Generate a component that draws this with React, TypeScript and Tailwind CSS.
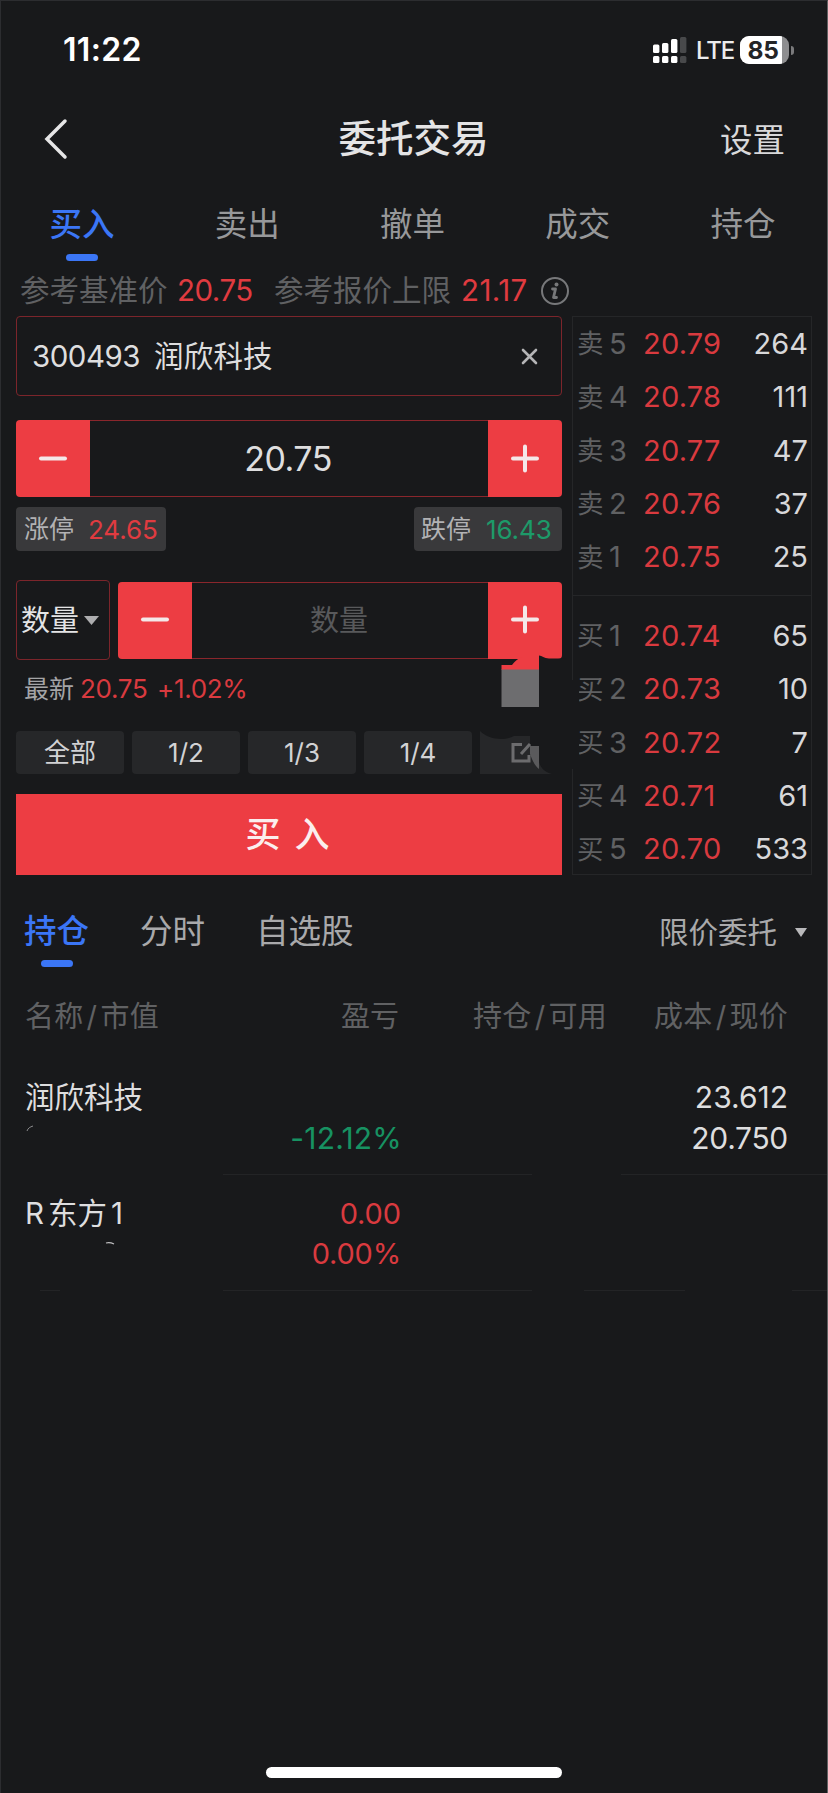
import React from "react";

const tabs = ["买入", "卖出", "撤单", "成交", "持仓"];

const asks = [
  ["5", "20.79", "264"],
  ["4", "20.78", "111"],
  ["3", "20.77", "47"],
  ["2", "20.76", "37"],
  ["1", "20.75", "25"],
];

const bids = [
  ["1", "20.74", "65"],
  ["2", "20.73", "10"],
  ["3", "20.72", "7"],
  ["4", "20.71", "61"],
  ["5", "20.70", "533"],
];

function StatusBar() {
  return (
    <div className="flex h-[98px] items-center pl-[62px]">
      <span className="w-[589px] text-[32px] leading-none font-semibold tracking-[0.3px] text-white">11:22</span>
      <svg className="h-[28px] w-[36px]" viewBox="0 0 36 28">
        <g fill="#fff">
          <rect x="1" y="8.5" width="6.4" height="8.5" rx="1.5" />
          <rect x="10" y="7" width="6.4" height="10" rx="1.5" />
          <rect x="19" y="3" width="6.4" height="14" rx="1.5" />
          <rect x="1" y="20" width="6.4" height="7" rx="1.5" />
          <rect x="10" y="20" width="6.4" height="7" rx="1.5" />
          <rect x="19" y="20" width="6.4" height="7" rx="1.5" />
        </g>
        <g fill="#48494b">
          <rect x="28" y="1" width="6.4" height="16" rx="1.5" />
          <rect x="28" y="20" width="6.4" height="7" rx="1.5" />
        </g>
      </svg>
      <span className="ml-[8px] w-[44px] pt-[2px] text-[24px] leading-none font-medium tracking-[-1.1px] text-[#ececec]">LTE</span>
      <div className="flex h-[28px] w-[49px] overflow-hidden rounded-[9px] bg-[#8e8e90]">
        <div className="flex w-[42px] items-center justify-center bg-white pl-[4px] text-[24.5px] leading-none font-bold tracking-[-0.2px] text-[#242527]">85</div>
      </div>
      <div className="ml-[2px] h-[9px] w-[3px] rounded-r-full bg-[#7a7a7c]" />
    </div>
  );
}

function Minus() {
  return (
    <svg className="h-[30px] w-[30px]" viewBox="0 0 30 30" stroke="#f4e8e9" strokeWidth="4" strokeLinecap="round">
      <path d="M3 14.500H27" />
    </svg>
  );
}

function Plus() {
  return (
    <svg className="h-[30px] w-[30px]" viewBox="0 0 30 30" stroke="#f4e8e9" strokeWidth="4" strokeLinecap="round">
      <path d="M3 14.500H27M15 2.500V26.500" />
    </svg>
  );
}

function Stepper({ children }: { children: React.ReactNode }) {
  return (
    <div className="flex h-[77px] flex-1 overflow-hidden rounded-[4px] bg-[#ed3d43]">
      <div className="flex w-[74px] items-center justify-center">
        <Minus />
      </div>
      <div className="flex flex-1 items-center justify-center border-y border-[#8a262c] bg-[#18191b]">{children}</div>
      <div className="flex w-[74px] items-center justify-center">
        <Plus />
      </div>
    </div>
  );
}

function BookRow({ side, row }: { side: string; row: string[] }) {
  return (
    <div className="flex h-[53.3px] items-center pr-[3px] pl-[4px] text-[29px] leading-none whitespace-nowrap">
      <span className="w-[32px] text-[26.5px] text-[#606163]">{side}</span>
      <span className="w-[34px] text-[#606163]">{row[0]}</span>
      <span className="tracking-[0.2px] text-[#d93a3f]">{row[1]}</span>
      <span className="ml-auto text-[#d8d8da]">{row[2]}</span>
    </div>
  );
}

function Shortcut({ children }: { children: React.ReactNode }) {
  return (
    <div className="flex h-[43px] w-[108px] items-center justify-center rounded-[4px] bg-[#262729] text-[26px] leading-none text-[#d2d2d4]">
      {children}
    </div>
  );
}

function OrderForm() {
  return (
    <div className="w-[546px]">
      <div className="flex h-[80px] items-center rounded-[4px] border border-[#7c252b] pt-[1px] pr-[23px] pl-[15px] leading-none text-[#dededf]">
        <span className="w-[122px] text-[29.5px] tracking-[-0.5px]">300493</span>
        <span className="text-[29.5px] tracking-[0.2px]">润欣科技</span>
        <svg className="ml-auto h-[17px] w-[17px]" viewBox="0 0 17 17" stroke="#b4b4b6" strokeWidth="2.6" strokeLinecap="round">
          <path d="M2 2L15 15M15 2L2 15" />
        </svg>
      </div>

      <div className="mt-[24px] flex">
        <Stepper>
          <span className="pt-[1px] pr-[2px] text-[34px] leading-none tracking-[-0.5px] text-[#dededf]">20.75</span>
        </Stepper>
      </div>

      <div className="mt-[10px] flex h-[44px] justify-between leading-none">
        <div className="flex w-[150px] items-center rounded-[4px] bg-[#39393b] pt-[1px] pl-[8px]">
          <span className="w-[64px] text-[25px] text-[#b2b2b4]">涨停</span>
          <span className="text-[26px] tracking-[-0.1px] text-[#e03b40]">24.65</span>
        </div>
        <div className="flex w-[148px] items-center rounded-[4px] bg-[#39393b] pt-[1px] pl-[7px]">
          <span className="w-[65px] text-[25px] text-[#b2b2b4]">跌停</span>
          <span className="text-[26px] tracking-[-0.1px] text-[#1d9a69]">16.43</span>
        </div>
      </div>

      <div className="mt-[29px] flex h-[80px] items-center gap-[8px]">
        <div className="flex h-[80px] w-[94px] items-center rounded-[4px] border border-[#7c252b] pt-[1px] pl-[4px]">
          <span className="text-[29px] leading-none text-[#e4e4e5]">数量</span>
          <svg className="ml-[5px] h-[9px] w-[15px]" viewBox="0 0 15 9">
            <path d="M0 0H15L7.500 9Z" fill="#adadaf" />
          </svg>
        </div>
        <Stepper>
          <span className="pt-[1px] pr-[2px] text-[29px] leading-none text-[#58595b]">数量</span>
        </Stepper>
      </div>

      <div className="relative flex h-[71px] items-start pt-[16px] pl-[8px] leading-none">
        <span className="w-[56px] text-[25px] leading-[26px] text-[#a4a4a6]">最新</span>
        <span className="w-[77px] text-[26px] tracking-[-0.3px] text-[#d93a3f]">20.75</span>
        <span className="text-[26px] tracking-[-0.3px] text-[#d93a3f]">+1.02%</span>
        <svg className="absolute top-[-8px] left-[479px] h-[58px] w-[72px]" viewBox="0 0 72 58">
          <path d="M44 3.500C47 3.500 49 6.500 54 6.500H72V14H44Z" fill="#18191b" />
          <path d="M6.500 13H17C20 9 23 6 28 5H44V18H6.500Z" fill="#ed3d43" />
          <rect x="6.500" y="17.500" width="37.500" height="37.500" fill="#6d6d6f" />
        </svg>
      </div>

      <div className="flex justify-between">
        <Shortcut>全部</Shortcut>
        <Shortcut>1/2</Shortcut>
        <Shortcut>1/3</Shortcut>
        <Shortcut>1/4</Shortcut>
        <svg className="h-[43px] w-[82px]" viewBox="0 0 82 43">
          <path d="M0 0C9 9 25 10 34 5H50V43H0Z" fill="#262729" />
          <path d="M50 15H59C56 30 60 40 72 43H50Z" fill="#262729" />
          <path d="M50 15H59V38C54 34 52 28 50 23Z" fill="#5a5a5c" />
          <path d="M42 13.500H33V30H49V24" fill="none" stroke="#6c6c6e" strokeWidth="3" />
          <path d="M41 23L50 13" stroke="#6c6c6e" strokeWidth="3" />
        </svg>
      </div>

      <div className="mt-[20px] flex h-[81px] items-center justify-center gap-[14px] bg-[#ed3d43] pr-[3px] text-[35px] leading-none font-medium text-[#fbeeee]">
        <span>买</span>
        <span>入</span>
      </div>
    </div>
  );
}

function OrderBook() {
  return (
    <div className="relative h-[559px] w-[240px] border border-[#252628]">
      <div className="h-[279px] border-b border-[#252628]">
        {asks.map((row) => (
          <BookRow key={row[0]} side="卖" row={row} />
        ))}
      </div>
      <div className="pt-[13px]">
        {bids.map((row) => (
          <BookRow key={row[0]} side="买" row={row} />
        ))}
      </div>
      <div className="absolute top-[363px] left-[-2px] h-[89px] w-[8px] bg-[#18191b]" />
    </div>
  );
}

function Positions() {
  return (
    <div className="text-[29px] leading-none whitespace-nowrap">
      <div className="flex h-[100px] items-center pr-[39px] pl-[24px] text-[#606163]">
        <span className="w-[200px] tracking-[0.3px]">名称<span className="mx-[3px]">/</span>市值</span>
        <span className="w-[174px] text-right">盈亏</span>
        <span className="w-[208px] text-right tracking-[0.3px]">持仓<span className="mx-[3px]">/</span>可用</span>
        <span className="ml-auto tracking-[0.3px]">成本<span className="mx-[3px]">/</span>现价</span>
      </div>

      <div className="relative h-[108px] pr-[39px] pl-[24px] text-[#dededf]">
        <div className="flex h-[62px] items-center justify-between">
          <span className="pt-[1px] text-[29.5px]">润欣科技</span>
          <span className="text-[30px]">23.612</span>
        </div>
        <div className="flex h-[19px] items-center">
          <span className="w-[377px] text-right text-[30px] tracking-[0.2px] text-[#179262]">-12.12%</span>
          <span className="ml-auto text-[30px] tracking-[-0.3px]">20.750</span>
        </div>
        <svg className="absolute top-[59px] left-[25px] h-[8px] w-[9px]" viewBox="0 0 9 8">
          <path d="M1 6C2 3 4 2 7 1" fill="none" stroke="#8b8b8d" strokeWidth="1" />
        </svg>
      </div>
      <div className="flex h-px">
        <div className="ml-[222px] w-[309px] bg-[#232426]" />
        <div className="ml-[89px] flex-1 bg-[#232426]" />
      </div>

      <div className="relative h-[115px] pl-[24px]">
        <div className="flex h-[59px] items-center pt-[18px]">
          <span className="text-[29.5px] text-[#dededf]">R<span className="mx-[4px]">东方</span>1</span>
          <span className="absolute left-[24px] w-[376px] text-right tracking-[-0.1px] text-[#d93a3f]">0.00</span>
        </div>
        <div className="flex h-[38px] items-center">
          <span className="w-[376px] text-right tracking-[-0.2px] text-[#d93a3f]">0.00%</span>
        </div>
        <svg className="absolute top-[65px] left-[104px] h-[7px] w-[10px]" viewBox="0 0 10 7">
          <path d="M1 3C4 2 7 3 9 4" fill="none" stroke="#c0c0c2" strokeWidth="1.200" />
        </svg>
      </div>
      <div className="flex h-px">
        <div className="ml-[39px] w-[20px] bg-[#232426]" />
        <div className="ml-[163px] w-[309px] bg-[#232426]" />
        <div className="ml-[52px] w-[101px] bg-[#232426]" />
        <div className="ml-[107px] flex-1 bg-[#232426]" />
      </div>
    </div>
  );
}

export default function App() {
  return (
    <div className="flex h-[1793px] w-[828px] flex-col overflow-hidden border-t border-r border-l border-t-[#2c2d30] border-r-[#606163] border-l-[#2c2d30] bg-[#18191b] font-['Inter','Noto_Sans_CJK_SC',sans-serif]">
      <StatusBar />

      <div className="flex h-[82px] items-center justify-between pr-[42px] pl-[42px] leading-none">
        <svg className="mb-[2px] h-[42px] w-[64px]" viewBox="0 0 64 42">
          <path d="M22 3L4 21L22 39" fill="none" stroke="#e6e6e7" strokeWidth="3.500" strokeLinecap="round" strokeLinejoin="miter" />
        </svg>
        <span className="pb-[2px] text-[37.5px] font-medium text-[#e4e4e5]">委托交易</span>
        <span className="pt-[2px] text-[32.5px] text-[#d8d8da]">设置</span>
      </div>

      <div className="mr-[1.5px] ml-[-1.5px] flex h-[87px]">
        {tabs.map((tab, i) => (
          <div key={tab} className="flex flex-1 flex-col items-center pt-[28px]">
            <span className={i === 0 ? "text-[32.5px] leading-[32px] font-medium text-[#3b76f6]" : "text-[32.5px] leading-[32px] text-[#97989a]"}>{tab}</span>
            {i === 0 && <div className="mt-[13px] h-[7px] w-[32px] rounded-full bg-[#3b76f6]" />}
          </div>
        ))}
      </div>

      <div className="flex h-[48px] items-center pb-[3px] pl-[19px] text-[29.5px] leading-none whitespace-nowrap text-[#606163]">
        <span className="w-[157px]">参考基准价</span>
        <span className="w-[97px] tracking-[-0.5px] text-[#e03b40]">20.75</span>
        <span className="w-[187px]">参考报价上限</span>
        <span className="w-[79px] tracking-[0.4px] text-[#e03b40]">21.17</span>
        <svg className="h-[30px] w-[30px]" viewBox="0 0 30 30" fill="none" stroke="#77787a">
          <circle cx="15" cy="15" r="13" strokeWidth="2" />
          <circle cx="16.500" cy="8.500" r="2" fill="#77787a" stroke="none" />
          <path d="M12.500 13H15.500L13.500 21.500H16.500" strokeWidth="2.800" strokeLinecap="round" strokeLinejoin="round" />
        </svg>
      </div>

      <div className="flex gap-[10px] pl-[15px]">
        <OrderForm />
        <OrderBook />
      </div>

      <div className="flex h-[91px] items-start pt-[41px] pl-[23px] leading-[32px] whitespace-nowrap">
        <div className="flex w-[116px] flex-col">
          <span className="text-[32.5px] font-medium text-[#3b76f6]">持仓</span>
          <div className="mt-[12px] ml-[17px] h-[7px] w-[32px] rounded-full bg-[#3b76f6]" />
        </div>
        <span className="w-[116px] text-[32.5px] text-[#a9a9ab]">分时</span>
        <span className="text-[32.5px] text-[#a9a9ab]">自选股</span>
        <div className="ml-auto flex items-center pr-[20px]">
          <span className="text-[29.5px] text-[#a9a9ab]">限价委托</span>
          <svg className="ml-[18px] h-[9px] w-[12px]" viewBox="0 0 12 9">
            <path d="M0 0H12L6 9Z" fill="#b9b9bb" />
          </svg>
        </div>
      </div>

      <Positions />

      <div className="mt-auto mb-[15px] ml-[265px] h-[11px] w-[296px] shrink-0 rounded-full bg-white" />
    </div>
  );
}
